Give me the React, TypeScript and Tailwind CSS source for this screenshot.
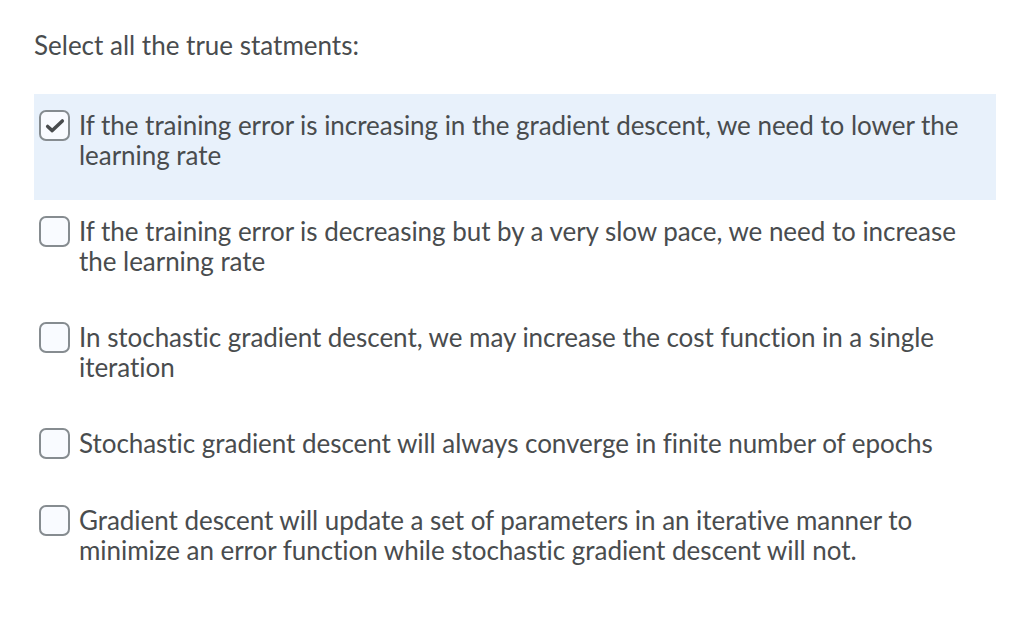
import React from 'react';

interface Option {
    text: string;
    checked: boolean;
}

const options: Option[] = [
    { text: 'If the training error is increasing in the gradient descent, we need to lower the learning rate', checked: true },
    { text: 'If the training error is decreasing but by a very slow pace, we need to increase the learning rate', checked: false },
    { text: 'In stochastic gradient descent, we may increase the cost function in a single iteration', checked: false },
    { text: 'Stochastic gradient descent will always converge in finite number of epochs', checked: false },
    { text: 'Gradient descent will update a set of parameters in an iterative manner to minimize an error function while stochastic gradient descent will not.', checked: false },
];

const CheckBox: React.FC<{ checked: boolean }> = ({ checked }) => (
    <span className="shrink-0 w-[31px] h-[31px] rounded-[7px] border-2 border-[#868c90] bg-[#f9fbff] flex items-center justify-center">
        {checked && (
            <svg viewBox="0 0 24 24" className="w-[22px] h-[22px]" fill="none" stroke="#494c4e" strokeWidth={3.8} strokeLinecap="round" strokeLinejoin="round">
                <path d="M4 12.5l5 4.5L20 6.5" />
            </svg>
        )}
    </span>
);

export default function App() {
    return (
        <div className="w-[1024px] h-[628px] bg-white text-[#494c4e] font-['Lato','Noto_Sans',sans-serif] overflow-hidden [font-variant-ligatures:none]">
            <div className="pl-[34px] pr-[28px] pt-[29px]">
                <h1 className="text-[26px] leading-[32px] font-normal">Select all the true statments:</h1>

                <div className="mt-[33px] flex flex-col">
                    {options.map((o, i) => (
                        <label
                            key={i}
                            className={`flex gap-[9px] pl-[5px] pr-[20px] pt-[16px] pb-[30px] ${o.checked ? 'bg-[#e8f1fb]' : ''}`}
                        >
                            <CheckBox checked={o.checked} />
                            <span className="text-[26px] leading-[30px] tracking-[-0.04px]">{o.text}</span>
                        </label>
                    ))}
                </div>
            </div>
        </div>
    );
}
